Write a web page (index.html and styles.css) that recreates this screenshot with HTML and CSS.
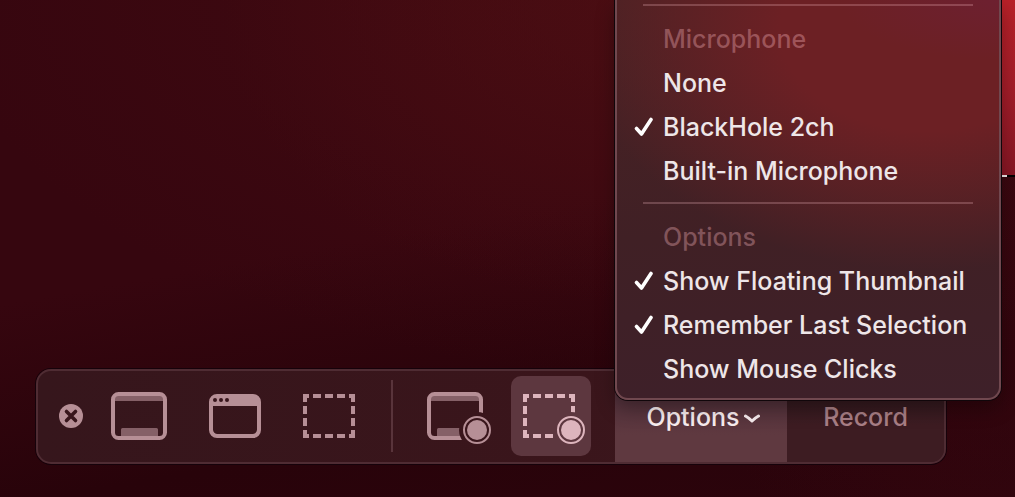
FILE: index.html
```html
<!DOCTYPE html>
<html lang="en">
<head>
<meta charset="utf-8">
<title>Screen Recording</title>
<link rel="stylesheet" href="styles.css">
</head>
<body>
<main class="desktop">
  <div class="red-window"></div>

  <div class="toolbar" role="toolbar" aria-label="Screen capture">
    <button class="close" type="button" aria-label="Close">
      <svg width="24" height="24" viewBox="0 0 24 24"><circle cx="12" cy="12" r="12" fill="currentColor"/><path d="M7.5 7.5l9 9M16.5 7.5l-9 9" stroke="#38161c" stroke-width="3.6" stroke-linecap="round"/></svg>
    </button>
    <button class="mode" type="button" aria-label="Capture entire screen">
      <svg width="80" height="80" viewBox="0 0 80 80">
        <path d="M15 19h50v6H15zM22 53.500q0-1.500 1.500-1.500h34q1.500 0 1.500 1.500V61H22z" fill="#856067"/>
        <rect x="14" y="18" width="52" height="44" rx="5.500" fill="none" stroke="currentColor" stroke-width="4"/>
      </svg>
    </button>
    <button class="mode" type="button" aria-label="Capture selected window">
      <svg width="80" height="80" viewBox="0 0 80 80">
        <path fill="currentColor" fill-rule="evenodd" d="M22 18H58a8 8 0 0 1 8 8V54a8 8 0 0 1-8 8H22a8 8 0 0 1-8-8V26a8 8 0 0 1 8-8zM18 30V53.500a4.500 4.500 0 0 0 4.500 4.500h35a4.500 4.500 0 0 0 4.500-4.500V30z"/>
        <g fill="#38161c"><circle cx="20" cy="24" r="2"/><circle cx="26" cy="24" r="2"/><circle cx="32" cy="24" r="2"/></g>
      </svg>
    </button>
    <button class="mode" type="button" aria-label="Capture selected portion">
      <svg width="80" height="80" viewBox="0 0 80 80">
        <path id="dashes" fill="currentColor" d="M12 18h6v4h-2v4h-4zM22 18h8v4h-8zM34 18h8v4h-8zM46 18h8v4h-8zM58 18h6v8h-4v-4h-2zM12 30h4v8h-4zM12 42h4v8h-4zM60 30h4v8h-4zM60 42h4v8h-4zM12 54h4v4h2v4h-6zM22 58h8v4h-8zM34 58h8v4h-8zM46 58h8v4h-8zM58 58h2v-4h4v8h-6z"/>
      </svg>
    </button>
    <span class="divider"></span>
    <button class="mode" type="button" aria-label="Record entire screen">
      <svg width="80" height="80" viewBox="0 0 80 80">
        <mask id="cut-screen"><rect width="80" height="80" fill="#fff"/><circle cx="62" cy="54" r="18" fill="#000"/></mask>
        <g mask="url(#cut-screen)">
          <path d="M15 19h50v6H15zM22 53.500q0-1.500 1.500-1.500h34q1.500 0 1.500 1.500V61H22z" fill="#856067"/>
          <rect x="14" y="18" width="52" height="44" rx="5.500" fill="none" stroke="currentColor" stroke-width="4"/>
        </g>
        <circle cx="62" cy="54" r="13" fill="none" stroke="currentColor" stroke-width="2"/><circle cx="62" cy="54" r="10" fill="currentColor"/>
      </svg>
    </button>
    <button class="mode selected" type="button" aria-label="Record selected portion" aria-pressed="true">
      <svg width="80" height="80" viewBox="0 0 80 80">
        <mask id="cut-portion"><rect width="80" height="80" fill="#fff"/><circle cx="60" cy="54" r="18" fill="#000"/></mask>
        <g mask="url(#cut-portion)"><use href="#dashes"/></g>
        <circle cx="60" cy="54" r="13" fill="none" stroke="currentColor" stroke-width="2"/><circle cx="60" cy="54" r="10" fill="currentColor"/>
      </svg>
    </button>
    <button class="options" type="button" aria-haspopup="menu" aria-expanded="true">Options
      <svg width="18" height="12" viewBox="0 0 18 12"><path d="M2.500 5Q6 7 9 10Q12 7 15.500 5" fill="none" stroke="currentColor" stroke-width="3" stroke-linecap="round" stroke-linejoin="round"/></svg>
    </button>
    <button class="record" type="button">Record</button>
  </div>

  <div class="menu" role="menu" aria-label="Options">
    <hr class="separator">
    <div class="heading">Microphone</div>
    <button class="item" type="button" role="menuitemradio" aria-checked="false">None</button>
    <button class="item" type="button" role="menuitemradio" aria-checked="true"><svg class="check" width="20" height="20" viewBox="0 0 20 20"><path d="M2.500 11.500L7.500 17L17 2.500"/></svg>BlackHole 2ch</button>
    <button class="item" type="button" role="menuitemradio" aria-checked="false">Built-in Microphone</button>
    <hr class="separator">
    <div class="heading">Options</div>
    <button class="item" type="button" role="menuitemcheckbox" aria-checked="true"><svg class="check" width="20" height="20" viewBox="0 0 20 20"><path d="M2.500 11.500L7.500 17L17 2.500"/></svg>Show Floating Thumbnail</button>
    <button class="item" type="button" role="menuitemcheckbox" aria-checked="true"><svg class="check" width="20" height="20" viewBox="0 0 20 20"><path d="M2.500 11.500L7.500 17L17 2.500"/></svg>Remember Last Selection</button>
    <button class="item" type="button" role="menuitemcheckbox" aria-checked="false">Show Mouse Clicks</button>
  </div>
</main>
</body>
</html>
```

FILE: styles.css
```css
* {
  box-sizing: border-box;
}

body {
  margin: 0;
  font-family: Inter, "Liberation Sans", sans-serif;
  font-size: 25px;
  font-weight: 500;
  line-height: 32px;
}

button {
  margin: 0;
  padding: 0;
  border: 0;
  background: none;
  color: inherit;
  font: inherit;
}

svg {
  display: block;
  flex: none;
}

.desktop {
  position: relative;
  min-height: 100vh;
  overflow: hidden;
  background:
    radial-gradient(ellipse 300px 400px at 100% 60%, #3e081180 0%, #3e081100 100%),
    radial-gradient(ellipse 760px 400px at 700px -20px, #52101480 0%, #52101400 100%),
    radial-gradient(ellipse 400px 300px at 620px 0, #52101480 0%, #52101400 100%),
    linear-gradient(170deg, #36060f 0%, #36060f 45%, #28030a 75%, #2c040c 100%);
}

.red-window {
  position: absolute;
  top: 0;
  right: 0;
  width: 13px;
  height: 177px;
  border-bottom: 2px solid #000;
  background: linear-gradient(#b92128, #a41d29 50%, #861624);
}

.red-window::after {
  content: "";
  position: absolute;
  top: 100%;
  left: 0;
  width: 5px;
  height: 2px;
  background: #f2eaea;
}

.toolbar {
  position: absolute;
  right: 69px;
  bottom: 33px;
  left: 36px;
  display: flex;
  align-items: center;
  gap: 16px;
  height: 95px;
  padding-left: 21px;
  overflow: hidden;
  border: 2px solid #4f2c33;
  border-radius: 15px;
  background: linear-gradient(90deg, #36161c, #3a151b 60%, #3d1c22);
  box-shadow: 0 0 0 1px #16020a;
  color: #b68f96;
}

.close,
.mode,
.divider {
  margin-bottom: 1px;
}

.mode {
  border-radius: 10px;
}

.selected {
  background: #5d373f;
  color: #ddb5bd;
}

.divider {
  width: 2px;
  height: 72px;
  margin-right: 6px;
  margin-left: 4px;
  background: #59343b;
}

.options {
  display: flex;
  align-items: center;
  justify-content: center;
  gap: 3px;
  align-self: stretch;
  width: 172px;
  margin-left: 8px;
  padding-left: 5px;
  background: linear-gradient(#51303a 30%, #5f3940 70%);
  color: #f8edef;
}

.record {
  flex: 1;
  align-self: stretch;
  margin-left: -16px;
  background: linear-gradient(#33191e 30%, #3d1c22 60%);
  color: #a97f86;
}

.menu {
  position: absolute;
  top: 0;
  right: 14px;
  width: 386px;
  padding: 4px 0 7px;
  border: 2px solid #70484f;
  border-top: 0;
  border-radius: 0 0 13px 13px;
  background:
    radial-gradient(ellipse 160px 60px at 100% 0, #6d2030 0%, #6d203000 100%),
    radial-gradient(ellipse 350px 240px at 310px 30px, #6c2024 0%, #6c2024 42%, #4b202400 100%),
    linear-gradient(#4a2224, #402025 60%, #3e2029);
  box-shadow: 0 0 0 1px #10060a, 0 8px 20px #0000004d;
  color: #eee6e8;
}

.separator {
  height: 2px;
  margin: 9px 26px 11px;
  border: 0;
  background: #ffc4cc3d;
}

.separator:first-child {
  margin-top: 0;
}

.heading,
.item {
  position: relative;
  display: flex;
  align-items: center;
  width: 100%;
  height: 44px;
  padding-left: 46px;
  white-space: nowrap;
}

.heading {
  color: #ffb9c159;
}

.check {
  position: absolute;
  top: 12px;
  left: 17px;
  fill: none;
  stroke: #fff;
  stroke-width: 3.6;
  stroke-linecap: round;
  stroke-linejoin: round;
}
```
